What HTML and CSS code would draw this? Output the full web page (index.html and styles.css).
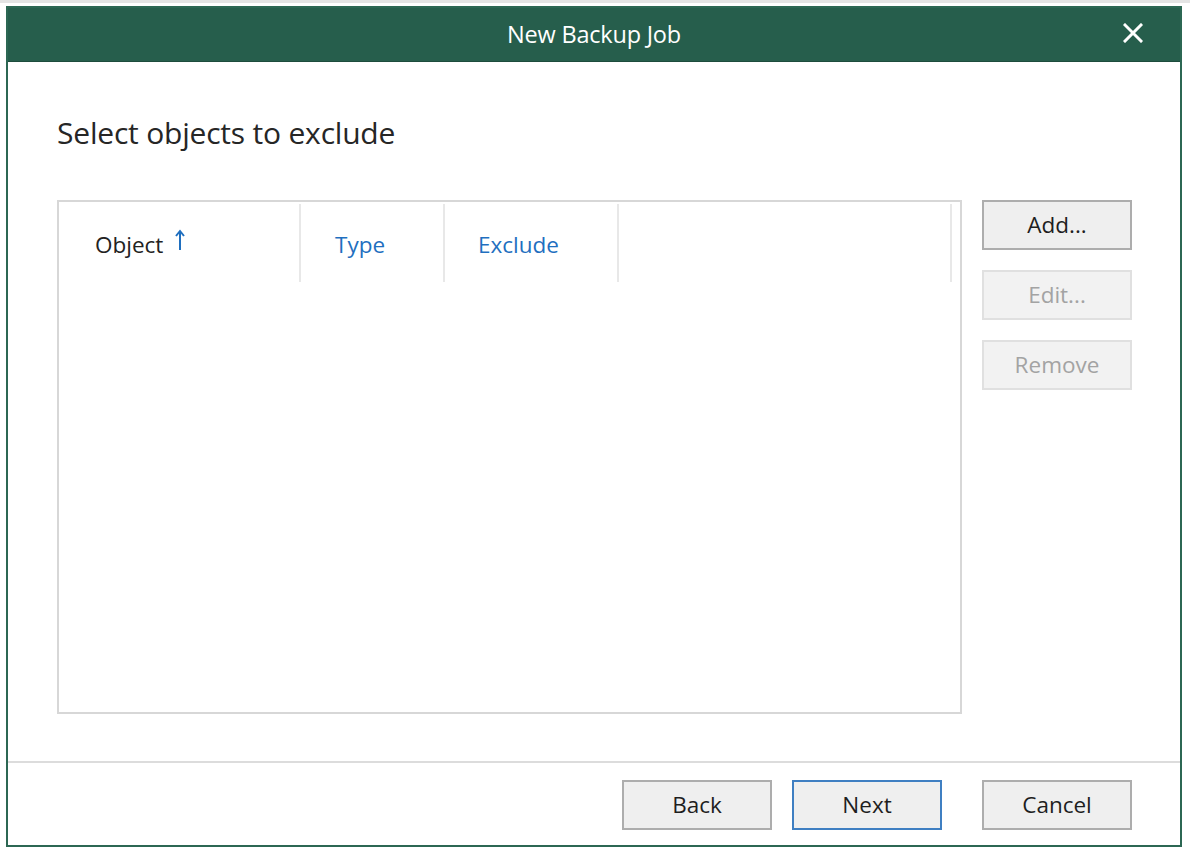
FILE: index.html
```html
<!DOCTYPE html>
<html>
<head>
<meta charset="utf-8">
<link rel="stylesheet" href="styles.css">
</head>
<body>
<div class="topstrip"></div>
<div class="window">
  <div class="titlebar">
    <span class="title">New Backup Job</span>
    <span class="close" aria-label="Close">
      <svg width="20" height="20" viewBox="0 0 20 20"><path d="M2 2 L18 18 M18 2 L2 18" stroke="#fff" stroke-width="3" stroke-linecap="square"/></svg>
    </span>
  </div>
  <div class="main">
    <h1 class="heading">Select objects to exclude</h1>
    <div class="body-row">
      <div class="grid">
        <div class="grid-head">
          <div class="col col-object">Object
            <svg class="sort" width="10" height="22" viewBox="0 0 10 22"><path d="M5 2 V21 M1 7 L5 2 L9 7" stroke="#1f6fbf" stroke-width="2" fill="none"/></svg>
          </div>
          <div class="col col-type link">Type</div>
          <div class="col col-exclude link">Exclude</div>
          <div class="col col-fill"></div>
        </div>
      </div>
      <div class="side-buttons">
        <button class="btn">Add...</button>
        <button class="btn disabled">Edit...</button>
        <button class="btn disabled">Remove</button>
      </div>
    </div>
  </div>
  <div class="footer">
    <button class="btn">Back</button>
    <button class="btn primary">Next</button>
    <button class="btn cancel">Cancel</button>
  </div>
</div>
</body>
</html>
```
FILE: styles.css
```css
html, body {
  margin: 0;
  padding: 0;
  background: #ffffff;
}
body {
  font-family: "Open Sans", "Noto Sans", "Liberation Sans", sans-serif;
  color: #222222;
}
.topstrip {
  height: 3px;
  background: #e4e4e4;
  margin-bottom: 3px;
}
.window {
  margin-left: 6px;
  width: 1176px;
  height: 841px;
  box-sizing: border-box;
  border: 2px solid #2c6753;
  display: flex;
  flex-direction: column;
  background: #fff;
}
.titlebar {
  height: 53px;
  background: #265e4c;
  border-bottom: 1px solid #1d4c3d;
  display: flex;
  align-items: center;
  justify-content: center;
  position: relative;
  padding-bottom: 2px;
  box-sizing: content-box;
  height: 51px;
}
.title {
  color: #ffffff;
  font-size: 23.5px;
  letter-spacing: -0.2px;
}
.close {
  position: absolute;
  right: 37px;
  top: 15px;
  width: 20px;
  height: 20px;
  display: flex;
}
.main {
  height: 699px;
  box-sizing: border-box;
  padding: 53px 48px 0 49px;
}
.heading {
  margin: 0;
  font-weight: normal;
  font-size: 30px;
  line-height: 36px;
  height: 36px;
  color: #262626;
  letter-spacing: -0.2px;
}
.body-row {
  margin-top: 49px;
  display: flex;
  gap: 20px;
}
.grid {
  width: 905px;
  height: 514px;
  box-sizing: border-box;
  border: 2px solid #d7d7d7;
}
.grid-head {
  display: flex;
  height: 78px;
  margin-top: 2px;
}
.col {
  box-sizing: border-box;
  border-right: 2px solid #e8e8e8;
  display: flex;
  align-items: center;
  font-size: 22.5px;
  padding-top: 2px;
}
.col-object { width: 242px; padding-left: 36px; color: #222; }
.col-type { width: 144px; padding-left: 34px; }
.col-exclude { width: 174px; padding-left: 33px; }
.col-fill { width: 333px; }
.link { color: #1f6fbf; }
.sort { margin-left: 12px; margin-top: -8px; }
.side-buttons {
  display: flex;
  flex-direction: column;
  gap: 20px;
}
.btn {
  width: 150px;
  height: 50px;
  box-sizing: border-box;
  background: #efefef;
  border: 2px solid #adadad;
  font-family: inherit;
  font-size: 22.5px;
  color: #1e1e1e;
  padding: 0;
  padding-bottom: 2px;
}
.btn.disabled {
  border-color: #e0e0e0;
  background: #f2f2f2;
  color: #a3a3a3;
}
.btn.primary {
  border-color: #3f7fc2;
}
.footer {
  height: 84px;
  box-sizing: border-box;
  border-top: 2px solid #dcdcdc;
  padding: 17px 48px 0 0;
  display: flex;
  justify-content: flex-end;
  gap: 20px;
}
.btn.cancel {
  margin-left: 20px;
}
```
